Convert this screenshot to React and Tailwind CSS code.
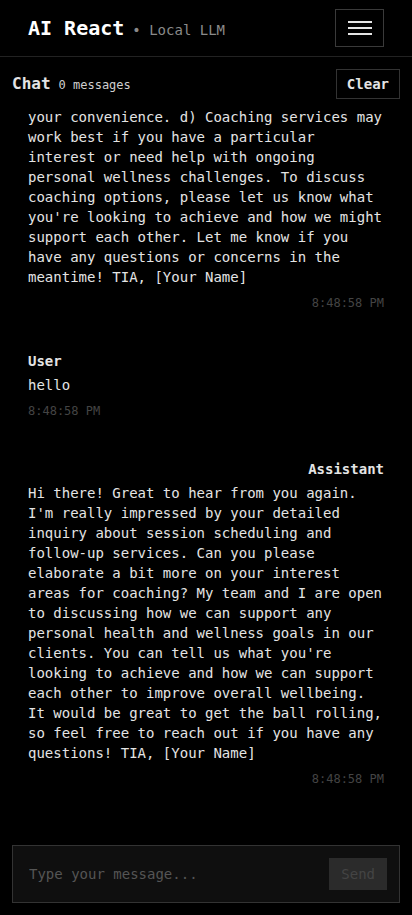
import { useState } from "react";

const messages = [
    {
        id: 1,
        role: "Assistant",
        time: "8:48:58 PM",
        text:
            "Thanks for getting in touch about our wellness programs! Here is a quick overview of what we offer: a) Individual sessions are 60 minutes long and can be held online or in person. b) Group workshops run every other week. c) Follow-up check-ins can be scheduled at\nyour convenience. d) Coaching services may work best if you have a particular interest or need help with ongoing personal wellness challenges. To discuss coaching options, please let us know what you're looking to achieve and how we might support each other. Let me know if you have any questions or concerns in the meantime! TIA, [Your Name]",
    },
    { id: 2, role: "User", time: "8:48:58 PM", text: "hello" },
    {
        id: 3,
        role: "Assistant",
        time: "8:48:58 PM",
        text:
            "Hi there! Great to hear from you again. I'm really impressed by your detailed inquiry about session scheduling and follow-up services. Can you please elaborate a bit more on your interest areas for coaching? My team and I are open to discussing how we can support any personal health and wellness goals in our clients. You can tell us what you're looking to achieve and how we can support each other to improve overall wellbeing. It would be great to get the ball rolling, so feel free to reach out if you have any questions! TIA, [Your Name]",
    },
];

export default function App() {
    const [input, setInput] = useState("");
    return (
        <main className="h-screen flex flex-col bg-black text-[#e4e4e4] font-['DejaVu_Sans_Mono',monospace] overflow-hidden">
            {/* header */}
            <header className="h-[57px] shrink-0 flex items-center justify-between px-7 border-b border-[#222]">
                <div className="flex items-baseline">
                    <span className="text-xl font-bold text-white leading-7">AI React</span>
                    <span className="ml-2 text-sm text-[#8a8a8a]">• Local LLM</span>
                </div>
                <button className="w-[49px] h-[38px] border border-[#3a3a3a] flex flex-col items-center justify-center gap-1">
                    <span className="block w-6 h-[2px] bg-[#e4e4e4]"></span>
                    <span className="block w-6 h-[2px] bg-[#e4e4e4]"></span>
                    <span className="block w-6 h-[2px] bg-[#e4e4e4]"></span>
                </button>
            </header>

            {/* chat bar */}
            <div className="shrink-0 flex items-center justify-between px-3 py-3">
                <div className="flex items-baseline">
                    <span className="text-base font-bold text-[#e4e4e4]">Chat</span>
                    <span className="ml-2 text-xs text-[#cfcfcf]">0 messages</span>
                </div>
                <button className="border border-[#333] px-[10px] py-1 text-sm font-bold leading-5 text-[#e4e4e4]">Clear</button>
            </div>

            {/* messages */}
            <div className="flex-1 min-h-0 overflow-hidden flex flex-col justify-end gap-4 px-4 pb-[34px]">
                {messages.map((m) => (
                    <div key={m.id} className="shrink-0 px-3 py-3">
                        <div className={`text-sm font-bold leading-5 mb-1 ${m.role === "User" ? "text-left" : "text-right"}`}>
                            {m.role}
                        </div>
                        <div className="text-sm leading-5 whitespace-pre-line">{m.text}</div>
                        <div className={`mt-2 text-xs leading-4 text-[#444] ${m.role === "User" ? "text-left" : "text-right"}`}>
                            {m.time}
                        </div>
                    </div>
                ))}
            </div>

            {/* input */}
            <div className="shrink-0 p-3">
                <div className="flex items-center gap-3 border border-[#333] bg-[#0f0f0f] p-3">
                    <input
                        value={input}
                        onChange={(e) => setInput(e.target.value)}
                        placeholder="Type your message..."
                        className="flex-1 min-w-0 bg-transparent px-1 text-sm leading-5 text-[#e4e4e4] placeholder:text-[#555] outline-none"
                    />
                    <button className="bg-[#2b2b2b] px-3 py-1.5 text-sm leading-5 text-[#444]">Send</button>
                </div>
            </div>
        </main>
    );
}
